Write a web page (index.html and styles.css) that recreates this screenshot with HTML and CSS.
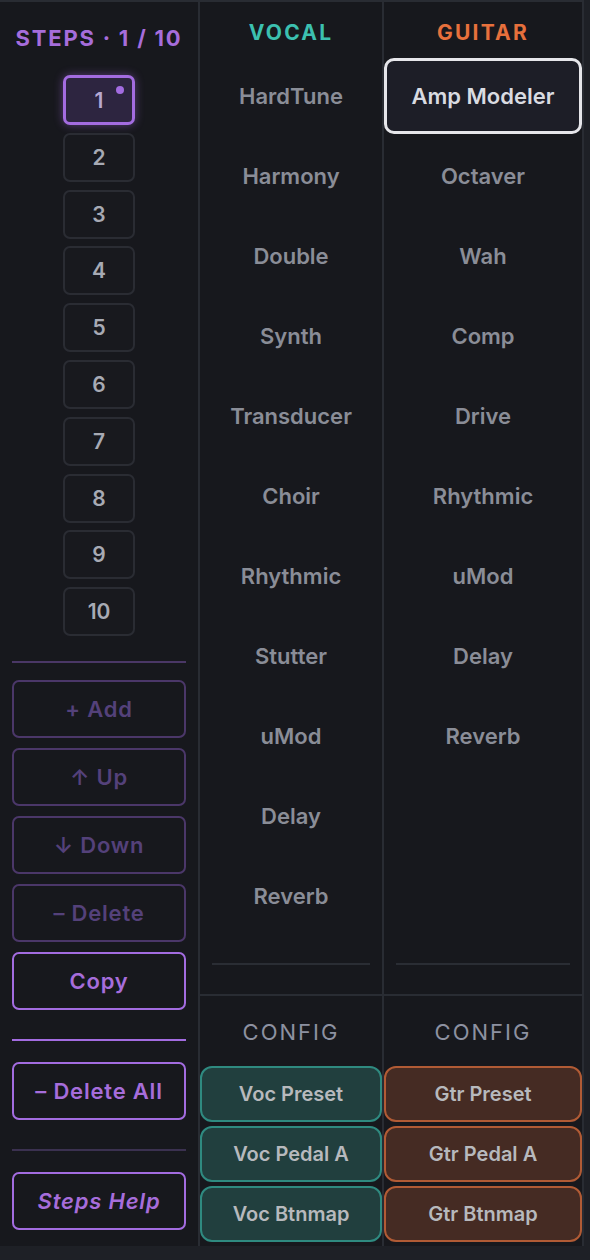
FILE: index.html
```html
<!DOCTYPE html>
<html lang="en">
<head>
<meta charset="utf-8">
<title>Steps</title>
<link rel="stylesheet" href="styles.css">
</head>
<body>
<div class="app">
  <aside class="steps">
    <div class="steps-title">STEPS · 1 / 10</div>
    <div class="step-list">
      <button class="step active">1<span class="dot"></span></button>
      <button class="step">2</button>
      <button class="step">3</button>
      <button class="step">4</button>
      <button class="step">5</button>
      <button class="step">6</button>
      <button class="step">7</button>
      <button class="step">8</button>
      <button class="step">9</button>
      <button class="step">10</button>
    </div>
    <div class="rule dim first"></div>
    <div class="actions">
      <button class="act dim">+ Add</button>
      <button class="act dim">↑ Up</button>
      <button class="act dim">↓ Down</button>
      <button class="act dim">– Delete</button>
      <button class="act">Copy</button>
    </div>
    <div class="rule bright"></div>
    <button class="act solo">– Delete All</button>
    <div class="rule dark"></div>
    <button class="act solo help">Steps Help</button>
  </aside>

  <section class="col vocal">
    <div class="col-head">VOCAL</div>
    <div class="fx-list">
      <div class="fx">HardTune</div>
      <div class="fx">Harmony</div>
      <div class="fx">Double</div>
      <div class="fx">Synth</div>
      <div class="fx">Transducer</div>
      <div class="fx">Choir</div>
      <div class="fx">Rhythmic</div>
      <div class="fx">Stutter</div>
      <div class="fx">uMod</div>
      <div class="fx">Delay</div>
      <div class="fx">Reverb</div>
    </div>
    <div class="col-rule"></div>
    <div class="config">
      <div class="config-label">CONFIG</div>
      <button class="cfg">Voc Preset</button>
      <button class="cfg">Voc Pedal A</button>
      <button class="cfg">Voc Btnmap</button>
    </div>
  </section>

  <section class="col guitar">
    <div class="col-head">GUITAR</div>
    <div class="fx-list">
      <div class="fx selected">Amp Modeler</div>
      <div class="fx">Octaver</div>
      <div class="fx">Wah</div>
      <div class="fx">Comp</div>
      <div class="fx">Drive</div>
      <div class="fx">Rhythmic</div>
      <div class="fx">uMod</div>
      <div class="fx">Delay</div>
      <div class="fx">Reverb</div>
    </div>
    <div class="col-rule"></div>
    <div class="config">
      <div class="config-label">CONFIG</div>
      <button class="cfg">Gtr Preset</button>
      <button class="cfg">Gtr Pedal A</button>
      <button class="cfg">Gtr Btnmap</button>
    </div>
  </section>
</div>
</body>
</html>
```

FILE: styles.css
```css
* { box-sizing: border-box; }

html, body {
  margin: 0;
  padding: 0;
  background: #1e2026;
  font-family: "Inter", "Liberation Sans", sans-serif;
}

button {
  font-family: inherit;
  cursor: pointer;
}

.app {
  display: grid;
  grid-template-columns: 198px 182px 198px;
  gap: 2px;
  width: 584px;
  height: 1246px;
  padding: 2px 2px 0 0;
  background: #292c33;
}

/* ---------- steps column ---------- */
.steps {
  background: #17181d;
  display: flex;
  flex-direction: column;
  align-items: center;
  padding: 0 12px;
}

.steps-title {
  height: 73px;
  padding-bottom: 2px;
  display: flex;
  align-items: center;
  justify-content: center;
  color: #a66ddb;
  font-size: 22px;
  font-weight: 700;
  letter-spacing: 1.8px;
  white-space: nowrap;
}

.step-list {
  display: flex;
  flex-direction: column;
  gap: 7.8px;
}

.step {
  position: relative;
  width: 72px;
  height: 49px;
  border: 2px solid #2a2c33;
  border-radius: 7px;
  background: #18191e;
  color: #a7aab4;
  font-size: 21px;
  font-weight: 600;
  padding: 0;
}

.step.active {
  height: 50px;
  border: 3px solid #a36ce0;
  background: #2d2540;
  color: #b6a8d2;
  box-shadow: 0 0 10px rgba(163, 108, 224, 0.45);
}

.step .dot {
  position: absolute;
  top: 8px;
  right: 8px;
  width: 8px;
  height: 8px;
  border-radius: 50%;
  background: #a36ce0;
}

.rule {
  align-self: stretch;
  height: 2px;
}
.rule.first { margin-top: 25px; }
.rule.dim { background: #4a3766; }
.rule.bright { background: #a36ce0; margin-top: 29px; }
.rule.dark { background: #3b3150; margin-top: 29px; }

.actions {
  align-self: stretch;
  display: flex;
  flex-direction: column;
  gap: 10px;
  margin-top: 17px;
}

.act {
  align-self: stretch;
  height: 58px;
  border: 2px solid #a36ce0;
  border-radius: 7px;
  background: #17181d;
  color: #a66ddb;
  font-size: 22px;
  font-weight: 600;
  letter-spacing: 0.8px;
  padding: 0;
}

.act.dim {
  border-color: #4b3769;
  color: #54417a;
}

.act.solo { margin-top: 21px; }

.act.help { font-style: italic; }

/* ---------- effect columns ---------- */
.col {
  background: #17181d;
  display: flex;
  flex-direction: column;
}

.col-head {
  height: 56px;
  padding-top: 4px;
  display: flex;
  align-items: center;
  justify-content: center;
  font-size: 21px;
  font-weight: 700;
  letter-spacing: 2.2px;
}

.vocal .col-head { color: #3cc0b0; }
.guitar .col-head { color: #e7703c; }

.fx-list {
  flex: 1;
  display: flex;
  flex-direction: column;
  gap: 4px;
}

.fx {
  height: 76px;
  display: flex;
  align-items: center;
  justify-content: center;
  color: #8a8d97;
  font-size: 22px;
  font-weight: 600;
  border-radius: 10px;
}

.fx.selected {
  border: 3px solid #e6e6ea;
  background: #1d1e27;
  color: #d9dbe1;
}

.col-rule {
  height: 2px;
  margin: 0 12px 29px;
  background: #2a2d34;
}

.config {
  border-top: 2px solid #292c33;
  height: 252px;
  display: flex;
  flex-direction: column;
  gap: 4px;
  padding-bottom: 4px;
}

.config-label {
  height: 66px;
  padding-top: 6px;
  display: flex;
  align-items: center;
  justify-content: center;
  color: #8d91a1;
  font-size: 22px;
  font-weight: 400;
  letter-spacing: 2px;
}

.cfg {
  height: 56px;
  border: 2px solid;
  border-radius: 12px;
  color: #b7b9bd;
  font-size: 20px;
  font-weight: 600;
  padding: 0;
}

.vocal .cfg {
  background: #213f3e;
  border-color: #2f8a80;
}

.guitar .cfg {
  background: #452b23;
  border-color: #b15b35;
}
```
